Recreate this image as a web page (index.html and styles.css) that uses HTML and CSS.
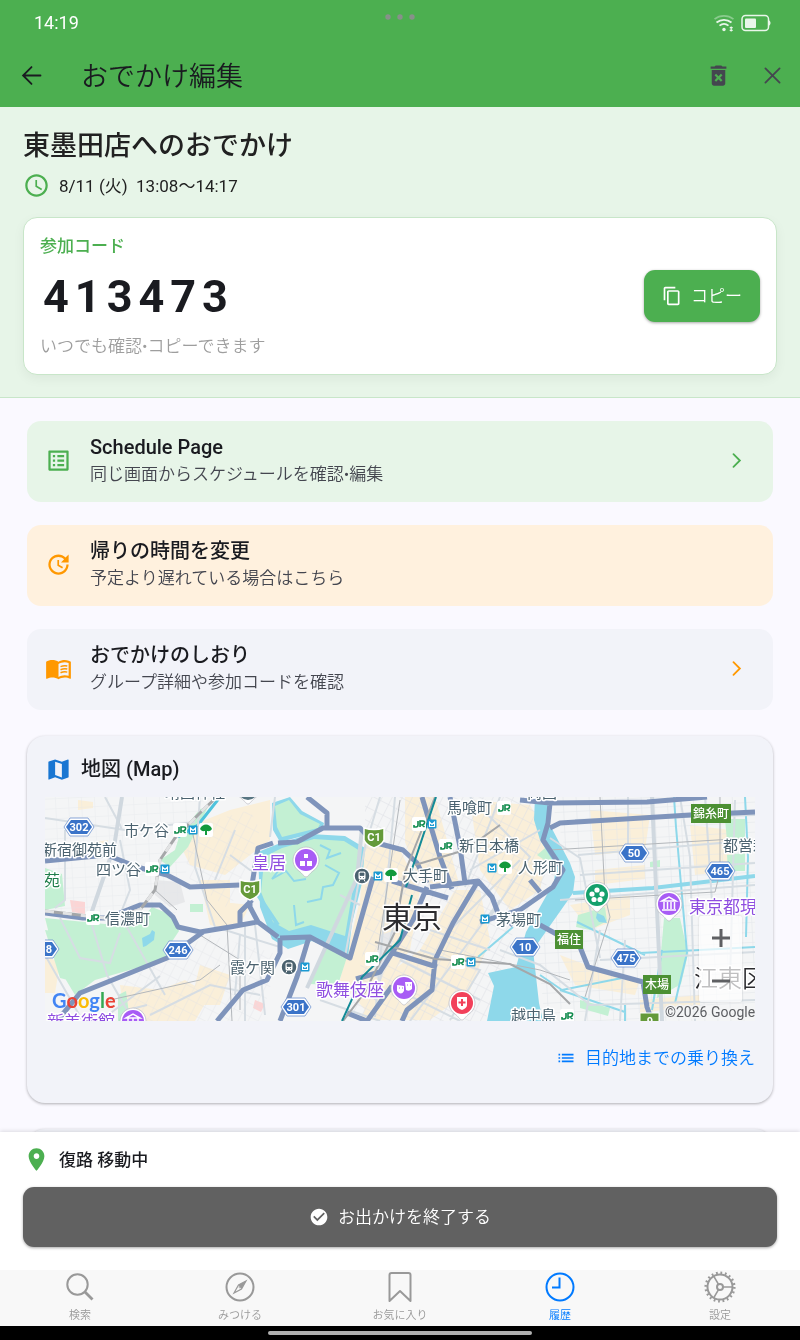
FILE: index.html
```html
<!DOCTYPE html>
<html lang="ja">
<head>
    <meta charset="UTF-8">
    <meta name="viewport" content="width=device-width, initial-scale=1.0">
    <title>おでかけ編集</title>
    <link rel="stylesheet" href="styles.css">
</head>
<body>
    <header class="top">
        <div class="status">
            <span class="clock">14:19</span>
            <svg class="dots" width="30" height="6" viewBox="0 0 30 6"><circle cx="3" cy="3" r="2.7"/><circle cx="15" cy="3" r="2.7"/><circle cx="27" cy="3" r="2.7"/></svg>
            <div class="status-icons">
                <svg width="20" height="18" viewBox="0 0 20 18" fill="none" stroke="#e9f6ea" stroke-width="1.7">
                    <path d="M0.5 5.2C6 .8 14 .8 19.500 5.2" stroke-opacity=".4"/>
                    <path d="M2.500 8.500c4.500-3.600 10.500-3.600 15 0M5.500 11.700c2.700-2.200 6.300-2.200 9 0"/>
                    <circle cx="10" cy="15.500" r="1.700" fill="#e9f6ea" stroke="none"/>
                    <path d="M17.200 12.500v5M15.700 13.700h3M15.700 16.300h3" stroke-width="1.200"/>
                </svg>
                <svg width="30" height="18" viewBox="0 0 30 18">
                    <rect x="1" y="1.500" width="26.500" height="15" rx="3.500" fill="none" stroke="#e9f6ea" stroke-width="1.500"/>
                    <rect x="4" y="4.500" width="11" height="9.500" rx="1" fill="#e9f6ea"/>
                    <path d="M28 6.500c2 .5 2 4.500 0 5z" fill="#e9f6ea"/>
                </svg>
            </div>
        </div>
        <div class="appbar">
            <button class="icon-btn" aria-label="戻る"><svg class="icon line" viewBox="0 0 24 24"><path d="M20 12H5M12 4.500L4.500 12l7.500 7.500"/></svg></button>
            <h1>おでかけ編集</h1>
            <button class="icon-btn muted" aria-label="削除"><svg class="icon" viewBox="0 0 24 24"><path d="M6 19c0 1.100.9 2 2 2h8c1.100 0 2-.9 2-2V7H6v12zm2.460-7.120l1.410-1.410L12 12.590l2.120-2.120 1.410 1.410L13.410 14l2.120 2.120-1.410 1.410L12 15.410l-2.120 2.120-1.410-1.410L10.590 14l-2.130-2.120zM15.500 4l-1-1h-5l-1 1H5v2h14V4z"/></svg></button>
            <button class="icon-btn muted" aria-label="閉じる"><svg class="icon line" viewBox="0 0 24 24"><path d="M5.700 5.700l12.600 12.600M18.300 5.700L5.700 18.300"/></svg></button>
        </div>
    </header>

    <main>
        <section class="hero">
            <h2>東墨田店へのおでかけ</h2>
            <div class="time">
                <svg class="icon green" viewBox="0 0 24 24"><path d="M11.990 2C6.470 2 2 6.480 2 12s4.470 10 9.990 10C17.520 22 22 17.520 22 12S17.520 2 11.990 2zM12 20c-4.420 0-8-3.580-8-8s3.580-8 8-8 8 3.580 8 8-3.580 8-8 8zm.5-13H11v6l5.250 3.150.75-1.230-4.500-2.670z"/></svg>
                <span>8/11 (火)&nbsp; 13:08〜14:17</span>
            </div>
            <div class="code-card">
                <div class="code-info">
                    <p class="code-label">参加コード</p>
                    <p class="code">413473</p>
                    <p class="code-note">いつでも確認•コピーできます</p>
                </div>
                <button class="copy-btn">
                    <svg class="icon-sm" viewBox="0 0 24 24"><path d="M16 1H4c-1.100 0-2 .9-2 2v14h2V3h12V1zm3 4H8c-1.100 0-2 .9-2 2v14c0 1.100.9 2 2 2h11c1.100 0 2-.9 2-2V7c0-1.100-.9-2-2-2zm0 16H8V7h11v14z"/></svg>
                    コピー
                </button>
            </div>
        </section>

        <div class="content">
            <nav class="menu">
                <a href="#schedule" class="item item-green">
                    <svg class="icon green" viewBox="0 0 24 24"><path d="M19 5v14H5V5h14m1.100-2H3.900c-.5 0-.9.4-.9.9v16.200c0 .4.4.9.9.9h16.200c.4 0 .9-.5.9-.9V3.900c0-.5-.5-.9-.9-.9zM11 7h6v2h-6V7zm0 4h6v2h-6v-2zm0 4h6v2h-6zM7 7h2v2H7zm0 4h2v2H7zm0 4h2v2H7z"/></svg>
                    <span class="item-text"><strong>Schedule Page</strong><small>同じ画面からスケジュールを確認•編集</small></span>
                    <svg class="icon line green" viewBox="0 0 24 24"><path d="M9.300 6.300L15 12l-5.700 5.700"/></svg>
                </a>
                <a href="#return" class="item item-orange">
                    <svg class="icon orange" viewBox="0 0 24 24"><path d="M21 10.120h-6.780l2.740-2.820c-2.730-2.700-7.150-2.800-9.880-.1-2.730 2.710-2.730 7.080 0 9.790s7.150 2.710 9.880 0C18.320 15.650 19 14.080 19 12.100h2c0 1.980-.88 4.550-2.640 6.290-3.510 3.480-9.210 3.480-12.720 0-3.500-3.470-3.530-9.110-.02-12.580s9.140-3.470 12.650 0L21 3v7.120zM12.500 8v4.250l3.500 2.080-.72 1.210L11 13V8h1.500z"/></svg>
                    <span class="item-text"><strong>帰りの時間を変更</strong><small>予定より遅れている場合はこちら</small></span>
                </a>
                <a href="#guide" class="item">
                    <svg class="icon orange" viewBox="0 0 24 24"><path d="M21 5c-1.110-.35-2.330-.5-3.500-.5-1.950 0-4.050.4-5.500 1.500-1.450-1.100-3.550-1.500-5.500-1.500S2.450 4.900 1 6v14.650c0 .25.25.5.5.5.1 0 .15-.05.25-.05C3.100 20.450 5.050 20 6.500 20c1.950 0 4.050.4 5.500 1.500 1.350-.85 3.800-1.500 5.500-1.500 1.650 0 3.350.3 4.750 1.050.1.05.15.05.25.05.25 0 .5-.25.5-.5V6c-.6-.45-1.250-.75-2-1zm0 13.500c-1.100-.35-2.300-.5-3.500-.5-1.700 0-4.150.65-5.500 1.500V8c1.350-.85 3.800-1.500 5.500-1.500 1.200 0 2.400.15 3.500.5v11.500z"/><path d="M13.800 10.400q3-1.300 6-.6M13.800 13.100q3-1.300 6-.6M13.800 15.800q3-1.300 6-.6" fill="none" stroke="currentColor" stroke-width="1.300"/></svg>
                    <span class="item-text"><strong>おでかけのしおり</strong><small>グループ詳細や参加コードを確認</small></span>
                    <svg class="icon line orange" viewBox="0 0 24 24"><path d="M9.300 6.300L15 12l-5.700 5.700"/></svg>
                </a>
            </nav>

            <section class="map-card">
                <h3><svg class="icon" viewBox="0 0 24 24"><path d="M20.500 3l-.16.03L15 5.100 9 3 3.360 4.900c-.21.07-.36.25-.36.48V20.500c0 .28.22.5.5.5l.16-.03L9 18.900l6 2.100 5.640-1.900c.21-.07.36-.25.36-.48V3.500c0-.28-.22-.5-.5-.5zM15 19l-6-2.110V5l6 2.110V19z"/></svg>地図 (Map)</h3>
                <div class="map">
                    <svg class="map-svg" viewBox="45 797 710 224" preserveAspectRatio="xMidYMid slice">
                        <defs>
                            <pattern id="streets" width="13" height="10" patternUnits="userSpaceOnUse" patternTransform="rotate(-3)"><path d="M0 0H13M0 0V10" stroke="#e2e5ea" stroke-width="1"/></pattern>
                            <pattern id="tilted" width="9" height="12" patternUnits="userSpaceOnUse" patternTransform="rotate(27)"><path d="M0 0H9M0 0V12" stroke="#dde0e5" stroke-width="1"/></pattern>
                            <g id="jr"><rect x="-7" y="-7" width="14" height="14" rx="2" fill="#fff"/><path d="M-1-3v4q0 2-2 2h-2V1M1 3v-6h3q2 0 1.500 2T3 1l2.500 2" fill="none" stroke="#0f8a4b" stroke-width="1.600"/></g>
                            <g id="metro"><rect x="-4.500" y="-4.500" width="9" height="9" rx="1" fill="#1b9ad2"/><path d="M-2.500-2v4.500h5V-2L0 .5z" fill="none" stroke="#fff" stroke-width="1.100"/></g>
                            <g id="toei"><rect x="-7" y="-7" width="14" height="14" rx="2" fill="#fff"/><path d="M-6-1C-4-7 4-7 6-1 4 2 2 1 1 1v4h-2V1c-1 0-3 1-5-2z" fill="#129a3c"/></g>
                            <g id="station"><circle r="8" fill="#4b626f" stroke="#fff" stroke-width="1.500"/><rect x="-3.500" y="-4.500" width="7" height="8" rx="1.500" fill="#fff"/><path d="M-2-3h4v2.500h-4zM-2 1.500h1M1 1.500h1" fill="#4b626f" stroke="#4b626f" stroke-width=".8"/><path d="M-2 3.500l-1 2M2 3.500l1 2" stroke="#fff"/></g>
                            <path id="pin" d="M0 17c-2 0-4-4-7-6a13 13 0 1 1 14 0c-3 2-5 6-7 6z" fill="#fff" stroke="#b9b9c2" stroke-width=".7"/>
                            <g id="hex"><path d="M-15 0l6-9H9l6 9-6 9H-9z" fill="#fff" stroke="#6f93cf" stroke-width=".8" stroke-linejoin="round"/><path d="M-13 0l5-7H8l5 7-5 7H-8z" fill="#3a73c8"/></g>
                            <path id="shield" d="M-10-9Q0-6 10-9V3Q8 8 0 11-8 8-10 3z" fill="#659a3a" stroke="#fff" stroke-width="1.500"/>
                        </defs>

                        <rect x="45" y="797" width="710" height="224" fill="#f4f5f6"/>
                        <!-- built-up blocks -->
                        <g fill="#faefd9">
                            <path d="M180 830l50-20 40-10v40l-20 15-25 20-35-10-10-20zM200 880h30v50l-20-5zM205 900l45 5-10 20h-30zM365 835l35 15 20 40-10 60-45 60-25-30 20-80zM405 797h30l25 90-40-5-15-40zM455 890h25l10 50-20 50-40 30h-70l20-40 40-30zM470 800l60 5 20 35-10 50-30 20-30-40zM590 810l60 5-5 35-50 5zM570 905l60-10v20l-40 15zM560 955l40 15 40 10-5 15-60-10zM690 825l40 5 5 40-40 5zM595 870l50-5v14l-50 6zM120 985l40 5 25-10 25 15-15 26h-70zM45 955l15 8-5 30H45zM200 965l30 10-10 30h-30z"/>
                            <path d="M78 800l15 2v6l-15 2zM90 843l18-3v5l-18 3zM640 1000l60-5v10l-60 8z"/>
                        </g>
                        <path d="M70 900l15 2v12l-13-2zM255 1000l10 4-4 8-8-4z" fill="#fbd5d5"/>
                        <path d="M155 880l25 2 5 20-15 5-15-12zM380 935l16-5-15 50-8-4z" fill="#e7e8ea"/>
                        <path d="M45 797h160l-30 120-60 5-70-10z" fill="url(#streets)" opacity=".6"/>
                        <path d="M550 797h205v224H545l-8-80 38-60z" fill="url(#streets)"/>
                        <path d="M365 797h170l25 70-45 60-30 94H350l15-80z" fill="url(#tilted)"/>
                        <path d="M120 980l60-30 30-15 70 20-20 66H130zM180 830l70-20 10 20-30 80-40-30z" fill="url(#tilted)" opacity=".6"/>

                        <!-- parks -->
                        <g fill="#c3f0d3">
                            <path d="M45 868l17 6 3 32-20 4zM45 918l60 6 35-3 12-14 20 8 7 16-8 12 5 12-36 12-45 13-20 15-18-30zM45 930l30 4 8 50-23-6zM160 860l15-10 5-16 20-25 8-2-20 40-18 20zM190 904h13v8h-13zM118 995l8-4 4 30h-12zM664 918h16l8 36-7 30-24 14zM725 819h20v24l-18-2zM727 855l18-2v18h-17zM578 915l27-8 2 14-17 9-14-3zM537 855l14-12 6 12-8 8zM580 1000l30 8-2 8-28-8zM650 862l10-2v7h-10z"/>
                        </g>
                        <path d="M142 938l8-4 2-4 3 2-1 8-8 6-3 1zM597 913l7 3 3 7-8-1-3-4z" fill="#8ed8ea"/>
                        <!-- palace moat -->
                        <path d="M272 803l18-6 12 14 22 12-2 8-42 11-7-12zM258 852l20-8 32-10 35 2 20 12-3 35-10 40-4 34-36-16-24 8-16-10-12-32z" fill="#8ed8ea"/>
                        <path d="M275 806l14-6 11 14 20 10-2 4-36 9-5-10zM264 857l18-9 32-9 30 2 16 10-3 25-4 12-8 48-34-11-22 6-16-9-12-30 2-20zM325 946l22 11-9 28-29-1z" fill="#c3f0d3"/>
                        <path d="M268 868l10 3-6 8 14-8 8 10 12-2M320 845l10 5-3 8 14-5M325 865l14 8-6 12-10 2-2 12-14 3M294 905l2 20 8-3" fill="none" stroke="#8ed8ea" stroke-width="2"/>

                        <!-- river and canals -->
                        <path d="M535 797h13l1 26 21 40 5 14-2 16-26 37-14 20 6 53 4 18h-56l7-35-6-13 28-6 10-35 28-50 2-16-16-26-6-20z" fill="#8ed8ea"/>
                        <g fill="none" stroke="#8ed8ea" stroke-width="2">
                            <path d="M573 893l80-5 102-12" stroke-width="4"/>
                            <path d="M674 797l2 30 11 126M745 797l3 60-2 80M640 953l60-3 55-3M577 922l68 33M687 953l-12 50M540 975l22 15 60-12M560 990l65 22M662 950l-10 60M513 927l-35 30M625 1005v16"/>
                            <path d="M220 797l-22 28-20 12" stroke="#4fc3dc" stroke-width="3"/>
                            <path d="M258 895l20 30" stroke-width="4"/>
                        </g>

                        <!-- minor roads -->
                        <g fill="none" stroke="#d6dde3" stroke-width="2">
                            <path d="M105 797l15 28 2 5M122 797l-8 50-24 70M65 830v70l-10 8M45 818l80 12 70-8M120 840l10 50-10 25 45 80M60 918l20 40 30 5 10-30M92 925l15 50 20 35 20-5M45 955l40 70M275 797l-5 40M362 828l-5 50-50 110M340 895l20 10M380 797l-15 50-20 110M395 797l-20 220M280 870h-30l-20-15M245 925v96M255 925l10 90M500 950l40 15 50 40 165-5M550 838l30 20 20 100M575 820l180-5M578 855l177-15M580 875l175-12M652 797l10 224M628 797v50M680 797l10 60 5 164M705 797l8 120M735 800l-5 180M560 900l195-15M600 960l155-8M600 930l-15 91M625 940l-5 81"/>
                            <path d="M200 797l-5 70 20 60 65 20M235 830l-20 50M240 935l-5 60M150 1015l60-30 50 10M100 1021l60-45M470 797l60 60-40 60M500 797l-35 90M540 830l-70 40M520 860l-70 70M500 900l-90 121M490 950l-60-20M480 1000l-80-40M460 1021l-60-30M320 1000l60 21M420 950l60 20-30 50M405 880l-30 120"/>
                        </g>
                        <path d="M652 797l10 224M362 828l-5 50-50 110M122 797l-8 50-24 70" fill="none" stroke="#d0d8df" stroke-width="4"/>
                        <path d="M192 830l15 70 20 25 5 96M200 935l40 25v50M155 890l22 20M110 1000l90-20 20-15M600 797l5 100 5 20-25 80M550 850l200-12M575 900l140-8 5-20V797M400 800l-22 150M440 950l100 20 30 10" fill="none" stroke="#b3b7bb" stroke-width="1"/>

                        <!-- trunk roads: casing, then fill -->
                        <g fill="none" stroke="#7f94bb" stroke-width="5" stroke-linejoin="round">
                            <path id="trunk" d="M45 861l62-6 30 12 30 8 23 12 50-2M45 913l38 5h24l33-13h20l13 12 5 10 22 5 30-5 27-5M273 843l-15 5-8 49v10l8 15 20 15M57 1021l23-28 40-16 47-19 36-26M240 927v-15l12-12M280 938l30-1 40 21 23-81M278 843l19-1 26-14h37l13 14 30 8 14 13 10 20M427 887l-14 33-21 33-12 19-24 7M307 797l20 16v14M422 797l18 60 12 32M392 881l56 17M450 797l10 50 5 36M430 887l48-6-25 42-18 37-3 30-25 20-5 11M478 881l14 16 6 16 15 12M540 925l40 22 8 20 55 15 4 25 5 14M393 953l44 14M520 800l30 3 97-1 60-5M550 803l-2 20-5 17 20 30-10 17-33 23-40 12M550 828l10-5 130-8 65-3M217 1021l26-31 24-10 13-27v-15M280 1021l17-44 12-40M530 880l10 12M347 1013l20 8 25-35"/>
                        </g>
                        <use href="#trunk" class="trunk-fill"/>

                        <!-- railways -->
                        <g fill="none" stroke="#a5a7a9" stroke-width="3">
                            <path d="M45 911l60 7 35-8 15-20 5-30 15-22 30-30 12-11"/>
                            <path d="M435 797l-30 75-10 60-30 60-22 29M375 942l60 17 75 5 40 20 20 20M500 825l-35 25-50 15" stroke-width="2"/>
                            <path d="M45 911l60 7 35-8 15-20 5-30 15-22 30-30 12-11" stroke="#e2e3e4" stroke-dasharray="9 9"/>
                            <path d="M436 797l-30 90M412 895l-12 45-38 37-20 44" stroke="#138b97" stroke-width="2"/>
                        </g>

                        <!-- badges -->
                        <g class="map-badge">
                            <use href="#hex" x="79" y="827"/><text x="79" y="831">302</text>
                            <use href="#hex" x="44" y="949"/><text x="49" y="953">8</text>
                            <use href="#hex" x="178" y="950"/><text x="178" y="954">246</text>
                            <use href="#hex" x="296" y="1007"/><text x="296" y="1011">301</text>
                            <use href="#hex" x="525" y="947"/><text x="525" y="951">10</text>
                            <use href="#hex" x="634" y="853"/><text x="634" y="857">50</text>
                            <use href="#hex" x="720" y="871"/><text x="720" y="875">465</text>
                            <use href="#hex" x="626" y="958"/><text x="626" y="962">475</text>
                            <use href="#shield" x="250" y="889"/><text x="250" y="893">C1</text>
                            <use href="#shield" x="374" y="837"/><text x="374" y="841">C1</text>
                            <path d="M640 1013h19v12h-19z" fill="#659a3a" stroke="#fff"/><text x="650" y="1025">9</text>
                        </g>
                        <g class="map-exit">
                            <rect x="691" y="804" width="40" height="19"/><text x="711" y="818">錦糸町</text>
                            <rect x="555" y="930" width="28" height="19"/><text x="569" y="944">福住</text>
                            <rect x="643" y="975" width="28" height="19"/><text x="657" y="989">木場</text>
                        </g>

                        <!-- place names -->
                        <g class="map-label">
                            <text x="124" y="836">市ケ谷</text>
                            <text x="42" y="855">新宿御苑前</text>
                            <text x="96" y="875">四ツ谷</text>
                            <text x="105" y="924">信濃町</text>
                            <text x="230" y="973">霞ケ関</text>
                            <text x="403" y="881">大手町</text>
                            <text x="447" y="813">馬喰町</text>
                            <text x="459" y="851">新日本橋</text>
                            <text x="518" y="873">人形町</text>
                            <text x="496" y="925">茅場町</text>
                            <text x="511" y="1021">越中島</text>
                            <text x="723" y="851">都営新宿線</text>
                            <text x="165" y="798">靖国神社</text>
                            <text x="527" y="798">両国</text>
                        </g>
                        <text x="44" y="886" class="map-label park">苑</text>
                        <g class="map-label sight">
                            <text x="252" y="869">皇居</text>
                            <text x="316" y="996">歌舞伎座</text>
                            <text x="689" y="913">東京都現代美術館</text>
                            <text x="47" y="1028">新美術館</text>
                        </g>
                        <text x="382" y="928" class="map-label city">東京</text>
                        <text x="694" y="987" class="map-label ward">江東区</text>

                        <use href="#jr" x="180" y="830"/><use href="#metro" x="193" y="830"/><use href="#toei" x="206" y="830"/>
                        <use href="#jr" x="152" y="869"/><use href="#metro" x="165" y="869"/>
                        <use href="#jr" x="93" y="918"/>
                        <use href="#jr" x="419" y="824"/><use href="#metro" x="432" y="824"/>
                        <use href="#jr" x="504" y="808"/><use href="#jr" x="446" y="846"/>
                        <use href="#metro" x="492" y="868"/><use href="#toei" x="505" y="867"/>
                        <use href="#station" x="362" y="876"/><use href="#metro" x="378" y="876"/><use href="#toei" x="391" y="875"/>
                        <use href="#metro" x="485" y="919"/>
                        <use href="#jr" x="372" y="959"/><use href="#jr" x="458" y="962"/><use href="#metro" x="471" y="962"/>
                        <use href="#station" x="289" y="967"/><use href="#metro" x="305" y="967"/>
                        <use href="#jr" x="567" y="1016"/>

                        <!-- pins -->
                        <use href="#pin" x="248" y="787"/><circle cx="248" cy="790" r="10" fill="#587582"/>
                        <use href="#pin" x="306" y="860"/><circle cx="306" cy="860" r="11" fill="#a85cf5"/>
                        <path d="M304 854h4v4h-4zM300 861h5v5h-5zM307 861h5v5h-5z" fill="#fff"/>
                        <use href="#pin" x="404" y="988"/><circle cx="404" cy="988" r="11" fill="#a85cf5"/>
                        <path d="M397 985l7 1v5q-3 5-7 0zM405 982h7v7q-3 3-6 1z" fill="#fff"/><path d="M399 988h1M402 988h1M407 985h1M410 985h1" stroke="#a85cf5"/>
                        <use href="#pin" x="462" y="1003"/><circle cx="462" cy="1003" r="11" fill="#f2405a"/>
                        <path d="M457 997h10v8q0 3-5 5-5-2-5-5z" fill="#fff"/><path d="M462 999v7M458.500 1002.500h7" stroke="#f2405a" stroke-width="2"/>
                        <use href="#pin" x="597" y="895"/><circle cx="597" cy="895" r="11" fill="#14a06b"/>
                        <g fill="#fff"><circle cx="597" cy="890" r="2.600"/><circle cx="602" cy="894" r="2.600"/><circle cx="600" cy="899.500" r="2.600"/><circle cx="594" cy="899.500" r="2.600"/><circle cx="592" cy="894" r="2.600"/></g>
                        <use href="#pin" x="669" y="904"/><circle cx="669" cy="904" r="11" fill="#a85cf5"/>
                        <path d="M662 901l7-4 7 4zM662 910h14M664 902v7M667.500 902v7M671 902v7M674.500 902v7" fill="none" stroke="#fff" stroke-width="1.500"/>
                        <use href="#pin" x="133" y="1021"/><circle cx="133" cy="1021" r="11" fill="#a85cf5"/>
                        <path d="M126 1018l7-4 7 4zM128 1018v5M133 1018v5M138 1018v5" fill="none" stroke="#fff" stroke-width="1.500"/>

                        <text x="52" y="1008" class="map-logo"><tspan fill="#4285f4">G</tspan><tspan fill="#ea4335">o</tspan><tspan fill="#fbbc05">o</tspan><tspan fill="#4285f4">g</tspan><tspan fill="#34a853">l</tspan><tspan fill="#ea4335">e</tspan></text>
                        <text x="665" y="1017" class="map-copy">©2026 Google</text>
                    </svg>
                    <div class="zoom">
                        <button aria-label="拡大"><svg width="20" height="20" viewBox="0 0 20 20"><path d="M10 1v18M1 10h18"/></svg></button>
                        <button aria-label="縮小"><svg width="20" height="20" viewBox="0 0 20 20"><path d="M1 10h18"/></svg></button>
                    </div>
                </div>
                <a href="#transfer" class="route">
                    <svg class="icon-sm" viewBox="0 0 24 24"><path d="M3 13h2v-2H3v2zm0 4h2v-2H3v2zm0-8h2V7H3v2zm4 4h14v-2H7v2zm0 4h14v-2H7v2zM7 7v2h14V7H7z"/></svg>
                    目的地までの乗り換え
                </a>
            </section>
            <section class="map-card"></section>
        </div>
    </main>

    <section class="action">
        <p class="state"><svg class="icon green" viewBox="0 0 24 24"><path d="M12 2C8.130 2 5 5.130 5 9c0 5.250 7 13 7 13s7-7.750 7-13c0-3.870-3.130-7-7-7zm0 9.500c-1.380 0-2.500-1.120-2.500-2.500s1.120-2.500 2.500-2.500 2.500 1.120 2.500 2.500-1.120 2.500-2.500 2.500z"/></svg>復路 移動中</p>
        <button class="finish-btn">
            <svg class="icon-sm" viewBox="0 0 24 24"><path d="M12 2C6.480 2 2 6.480 2 12s4.480 10 10 10 10-4.480 10-10S17.520 2 12 2zm-2 15l-5-5 1.410-1.410L10 14.170l7.590-7.590L19 8l-9 9z"/></svg>
            お出かけを終了する
        </button>
    </section>

    <nav class="tabs">
        <a href="#search"><svg viewBox="0 0 32 32"><circle cx="13.500" cy="13.500" r="10.200"/><path d="M20.500 20.500l8 8" stroke-width="2.800"/></svg>検索</a>
        <a href="#find"><svg viewBox="0 0 32 32"><circle cx="16" cy="16" r="13.500"/><path d="M22 10l-4.500 8-7.500 4 4.500-8z" stroke-width="1.200"/><path d="M22 10l-4.500 8-3-4z" fill="currentColor" stroke="none"/><circle cx="16" cy="16" r="1" stroke-width=".8"/></svg>みつける</a>
        <a href="#favorite"><svg viewBox="0 0 32 32"><path d="M5.500 30V4q0-2 2-2h17q2 0 2 2v26L16 20z" stroke-linejoin="round"/></svg>お気に入り</a>
        <a href="#history" class="active"><svg viewBox="0 0 32 32"><circle cx="16" cy="16" r="13.500"/><path d="M15.500 6.500v10H8"/></svg>履歴</a>
        <a href="#settings"><svg viewBox="0 0 32 32"><circle cx="16" cy="16" r="12.500"/><circle cx="16" cy="16" r="14.300" stroke-width="2.500" stroke-dasharray="1.800 2.692"/><circle cx="16" cy="16" r="3"/><path d="M19 16h9.500M14.500 13.400L9.700 5.200M14.500 18.600l-4.800 8.200" stroke-width="1.600"/></svg>設定</a>
    </nav>
    <div class="home"><span></span></div>
</body>
</html>
```
FILE: styles.css
```css
* {
    box-sizing: border-box;
}
body {
    margin: 0;
    height: 100vh;
    display: flex;
    flex-direction: column;
    font-family: Roboto, "Noto Sans CJK JP", sans-serif;
    font-size: 17px;
    font-weight: 350;
    line-height: 24px;
    color: #1a1b20;
    background-color: #faf9ff;
}
h1, h2, h3, p {
    margin: 0;
}
a {
    color: inherit;
    text-decoration: none;
}
button {
    font: inherit;
    border: none;
    cursor: pointer;
}
.icon {
    width: 27px;
    height: 27px;
    flex: none;
    fill: currentColor;
}
.icon.line {
    fill: none;
    stroke: currentColor;
    stroke-width: 1.6;
    stroke-linecap: round;
}
.icon-sm {
    width: 20px;
    height: 20px;
    flex: none;
    fill: currentColor;
}
.green {
    color: #4caf50;
}
.orange {
    color: #ff9800;
}

/* Header */
.top {
    background-color: #4caf50;
}
.status {
    display: grid;
    grid-template-columns: 1fr auto 1fr;
    height: 46px;
    padding: 0 29px;
    align-items: center;
    color: #fff;
}
.clock {
    padding-left: 5px;
    font-size: 18px;
    font-weight: 400;
}
.dots {
    align-self: start;
    margin-top: 14px;
    fill: #87918a;
}
.status-icons {
    display: flex;
    justify-content: flex-end;
    gap: 7px;
}
.appbar {
    display: flex;
    align-items: center;
    height: 61px;
    padding: 0 14px 2px 18px;
}
.appbar h1 {
    flex: 1;
    margin-left: 36px;
    padding-top: 3px;
    font-size: 27px;
    font-weight: 350;
    line-height: 36px;
}
.icon-btn {
    display: flex;
    padding: 0;
    background: none;
    color: #1a1b20;
}
.icon-btn.muted {
    margin-left: 27px;
    color: #44464f;
}

/* Outing summary */
main {
    flex: 1;
    min-height: 0;
    overflow: hidden;
}
.hero {
    padding: 21px 23px 22px;
    background-color: #e7f5e8;
    border-bottom: 1px solid #c8e6c9;
}
.hero h2 {
    font-size: 27px;
    font-weight: 500;
    line-height: 36px;
    color: #212121;
}
.time {
    display: flex;
    align-items: center;
    gap: 9px;
    margin: 8px 0 18px;
    font-weight: 400;
    color: #212121;
}
.code-card {
    display: flex;
    align-items: center;
    justify-content: space-between;
    padding: 16px;
    background-color: #fff;
    border: 1px solid #c8e6c9;
    border-radius: 14px;
    box-shadow: 0 4px 12px rgba(0, 0, 0, 0.05);
}
.code-label {
    font-weight: 500;
    color: #4caf50;
}
.code {
    margin: 15px 0 13px;
    padding-left: 3px;
    font-size: 45px;
    font-weight: 700;
    line-height: 48px;
    letter-spacing: 6px;
}
.code-note {
    color: #9e9e9e;
}
.copy-btn {
    display: flex;
    align-items: center;
    gap: 9px;
    height: 52px;
    padding: 0 18px;
    color: #fff;
    background-color: #4caf50;
    border-radius: 11px;
    box-shadow: 0 1px 3px rgba(0, 0, 0, 0.35);
}

/* Menu */
.content {
    padding: 23px 27px;
}
.menu {
    display: flex;
    flex-direction: column;
    gap: 23px;
    margin-bottom: 26px;
}
.item {
    display: flex;
    align-items: center;
    gap: 18px;
    padding: 12px 23px 14px 18px;
    background-color: #f2f3f9;
    border-radius: 14px;
}
.item-green {
    background-color: #e7f5e8;
}
.item-orange {
    background-color: #fff1de;
}
.item-text {
    flex: 1;
}
.item-text strong,
.item-text small {
    display: block;
}
.item-text strong {
    font-size: 20px;
    font-weight: 500;
    line-height: 28px;
}
.item-text small {
    font-size: 17px;
    line-height: 27px;
    color: #44464f;
}

/* Map */
.map-card {
    min-height: 60px;
    margin-bottom: 26px;
    padding: 18px 18px 31px;
    background-color: #f2f3f9;
    border-radius: 18px;
    box-shadow: 0 1px 3px rgba(0, 0, 0, 0.3);
}
.map-card h3 {
    display: flex;
    align-items: center;
    gap: 9px;
    margin-bottom: 13px;
    font-size: 20px;
    font-weight: 500;
    line-height: 30px;
}
.map-card h3 .icon {
    color: #1976d2;
}
.map {
    position: relative;
    height: 224px;
    overflow: hidden;
}
.map-svg {
    display: block;
    width: 100%;
    height: 100%;
}
.trunk-fill {
    mix-blend-mode: screen;
    opacity: 0.2;
}
.map-label {
    font-size: 15px;
    font-weight: 400;
    fill: #4b626f;
    stroke: #fff;
    stroke-width: 3px;
    stroke-linejoin: round;
    paint-order: stroke;
}
.map-label.sight {
    font-size: 17px;
    fill: #8f4ee0;
}
.map-label.park {
    font-size: 16px;
    fill: #1f7d4a;
}
.map-label.city {
    font-size: 30px;
    fill: #2c2c30;
}
.map-label.ward {
    font-size: 24px;
    font-weight: 350;
    fill: #2c2c30;
}
.map-badge {
    font-size: 11px;
    font-weight: 700;
    text-anchor: middle;
}
.map-badge text {
    fill: #fff;
}
.map-exit {
    font-size: 12px;
    font-weight: 500;
    text-anchor: middle;
    fill: #fff;
}
.map-exit rect {
    fill: #4c9033;
}
.map-logo {
    font-family: Lato, sans-serif;
    font-size: 20px;
    font-weight: 700;
}
.map-copy {
    font-size: 14px;
    font-weight: 400;
    fill: #5c5e62;
    stroke: #f4f5f6;
    stroke-width: 3px;
    paint-order: stroke;
}
.zoom {
    position: absolute;
    right: 13px;
    bottom: 19px;
    width: 43px;
    background-color: rgba(255, 255, 255, 0.7);
    border-radius: 2px;
    box-shadow: 0 0 2px rgba(0, 0, 0, 0.15);
}
.zoom button {
    display: flex;
    align-items: center;
    justify-content: center;
    width: 100%;
    height: 43px;
    padding: 0;
    background: none;
}
.zoom svg {
    stroke: #5f6063;
    stroke-width: 3px;
}
.route {
    display: flex;
    align-items: center;
    justify-content: flex-end;
    gap: 9px;
    margin-top: 23px;
    line-height: 28px;
    color: #007aff;
}

/* Bottom panel */
.action {
    position: relative;
    padding: 14px 23px 23px;
    background-color: #fff;
    box-shadow: 0 -1px 4px rgba(0, 0, 0, 0.12);
}
.state {
    display: flex;
    align-items: center;
    gap: 9px;
    margin-bottom: 14px;
    font-weight: 500;
}
.finish-btn {
    display: flex;
    align-items: center;
    justify-content: center;
    gap: 9px;
    width: 100%;
    height: 60px;
    color: #fff;
    background-color: #616161;
    border-radius: 11px;
    box-shadow: 0 1px 3px rgba(0, 0, 0, 0.35);
}
.tabs {
    position: relative;
    display: flex;
    height: 56px;
    background-color: #f8f8f8;
    color: #999;
}
.tabs a {
    flex: 1;
    display: flex;
    flex-direction: column;
    align-items: center;
    padding-top: 1px;
    font-size: 11px;
    line-height: 26px;
}
.tabs svg {
    flex: none;
    width: 32px;
    height: 32px;
    fill: none;
    stroke: currentColor;
    stroke-width: 2px;
}
.tabs .active {
    color: #007aff;
}
.home {
    display: flex;
    align-items: center;
    justify-content: center;
    height: 14px;
    background-color: #000;
}
.home span {
    width: 33%;
    height: 4px;
    border-radius: 2px;
    background-color: #b0b0b0;
}
```
